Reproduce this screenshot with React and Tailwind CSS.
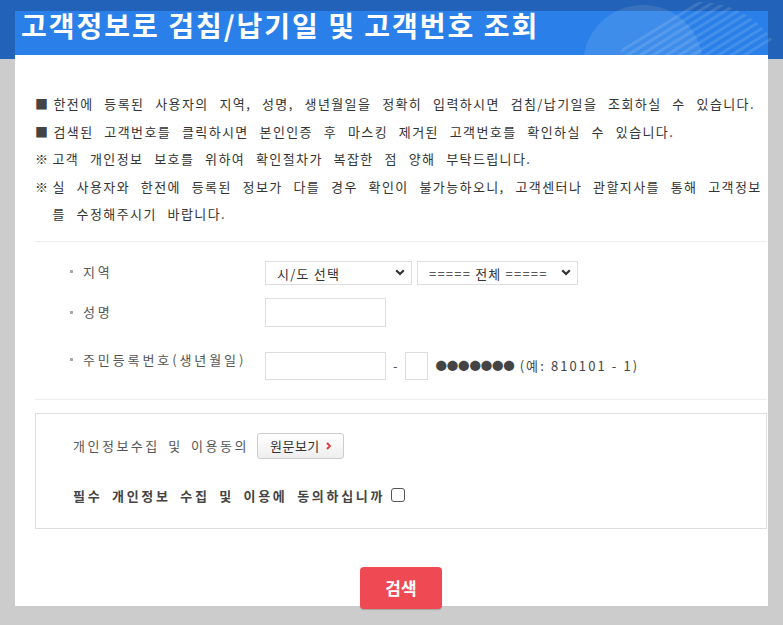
import React from "react";

const font = { fontFamily: '"Noto Sans CJK KR", "Noto Sans", sans-serif' };

function Label({ children, top }) {
    return (
        <div className={`flex w-[230px] shrink-0 items-center gap-[10px] pl-[35px] text-[13px] tracking-[2.9px] text-[#555] ${top ? "leading-[16px]" : ""}`}>
            <span className="h-[3px] w-[3px] bg-[#aaa]"></span>
            <span>{children}</span>
        </div>
    );
}

function Select({ width, children }) {
    return (
        <div className={`relative h-[24px] ${width}`}>
            <select className="h-full w-full appearance-none border border-[#ddd] bg-white pl-[11px] text-[13px] tracking-[1.2px] text-[#333] outline-none">
                <option>{children}</option>
            </select>
            <svg className="pointer-events-none absolute right-[7px] top-[9px]" width="10" height="7" viewBox="0 0 10 7">
                <path d="M1.2 1.2 L5 5 L8.8 1.2" fill="none" stroke="#333" strokeWidth="2.2" />
            </svg>
        </div>
    );
}

export default function App() {
    return (
        <div
            className="relative min-h-[625px] bg-[linear-gradient(to_bottom,#2262b8_59px,#cccccc_59px)] px-[15px] pt-[15px]"
            style={font}
        >
            {/* header decoration */}
            <svg className="pointer-events-none absolute left-0 top-0 z-10" width="783" height="59" viewBox="0 0 783 59">
                <defs>
                    <clipPath id="stripeClip">
                        <circle cx="700" cy="90" r="88" />
                    </clipPath>
                </defs>
                <circle cx="643" cy="65" r="60" fill="#ffffff" fillOpacity="0.1" />
                <g clipPath="url(#stripeClip)" stroke="#ffffff" strokeOpacity="0.12" strokeWidth="3">
                    {[600, 613, 626, 639, 652, 665, 678, 691, 704, 717, 730].map((x) => (
                        <line key={x} x1={x} y1="64" x2={x + 104} y2="0" />
                    ))}
                </g>
            </svg>

            <div className="h-[595px] bg-white">
                <div className="h-[44px] bg-[#2a80e8] pl-[6px]">
                    <h1 className="-mt-[4px] text-[28px] font-bold leading-[28px] tracking-[2px] text-white">
                        고객정보로 검침/납기일 및 고객번호 조회
                    </h1>
                </div>

                <div className="pl-[20px] pr-[1px]">
                    <div className="whitespace-nowrap pt-[35px] text-[13px] leading-[27.5px] tracking-[1.4px] text-[#333] [word-spacing:6.5px]">
                        <p className="flex">
                            <span className="mr-[4px] text-[#444]">■</span>
                            <span>한전에 등록된 사용자의 지역, 성명, 생년월일을 정확히 입력하시면 검침/납기일을 조회하실 수 있습니다.</span>
                        </p>
                        <p className="flex">
                            <span className="mr-[4px] text-[#444]">■</span>
                            <span>검색된 고객번호를 클릭하시면 본인인증 후 마스킹 제거된 고객번호를 확인하실 수 있습니다.</span>
                        </p>
                        <p className="flex">
                            <span className="mr-[3px]">※</span>
                            <span>고객 개인정보 보호를 위하여 확인절차가 복잡한 점 양해 부탁드립니다.</span>
                        </p>
                        <p className="flex">
                            <span className="mr-[3px]">※</span>
                            <span>
                                실 사용자와 한전에 등록된 정보가 다를 경우 확인이 불가능하오니, 고객센터나 관할지사를 통해 고객정보
                                <br />
                                를 수정해주시기 바랍니다.
                            </span>
                        </p>
                    </div>

                    <div className="mt-[13px] border-t border-[#eee]"></div>

                    <div className="pt-[18px]">
                        <div className="flex items-center">
                            <Label>지역</Label>
                            <div className="flex gap-[5px]">
                                <Select width="w-[147px]">시/도 선택</Select>
                                <Select width="w-[161px]">===== 전체 =====</Select>
                            </div>
                        </div>

                        <div className="mt-[14px] flex items-center">
                            <Label>성명</Label>
                            <input className="h-[29px] w-[121px] border border-[#ddd] outline-none" />
                        </div>

                        <div className="mt-[25px] flex items-start">
                            <Label top>주민등록번호(생년월일)</Label>
                            <div className="flex items-center">
                                <input className="h-[28px] w-[121px] border border-[#ddd] outline-none" />
                                <span className="mx-[7px] text-[13px] text-[#555]">-</span>
                                <input className="h-[28px] w-[23px] border border-[#ddd] outline-none" />
                                <span className="ml-[8px] text-[11.5px] tracking-[-0.2px] text-[#444]">●●●●●●●</span>
                                <span className="ml-[5px] text-[13px] tracking-[2.1px] text-[#444]">(예: 810101 - 1)</span>
                            </div>
                        </div>
                    </div>

                    <div className="mt-[19px] border-t border-[#eee]"></div>

                    <div className="mt-[13px] h-[116px] border border-[#ddd] pl-[37px] pt-[19px]">
                        <div className="flex items-center">
                            <span className="text-[13px] tracking-[2.5px] text-[#555] [word-spacing:3px]">개인정보수집 및 이용동의</span>
                            <button className="ml-[8px] flex h-[26px] w-[87px] items-center justify-center gap-[6px] rounded-[3px] border border-[#ccc] bg-[linear-gradient(to_bottom,#ffffff,#eeeeee)] text-[13px] tracking-[0.5px] text-[#333]">
                                원문보기
                                <svg width="5" height="8" viewBox="0 0 5 8">
                                    <path d="M1 1 L4 4 L1 7" fill="none" stroke="#e8343c" strokeWidth="1.8" />
                                </svg>
                            </button>
                        </div>
                        <div className="mt-[27px] flex items-center">
                            <span className="text-[13px] font-bold tracking-[2.7px] text-[#444] [word-spacing:4px]">
                                필수 개인정보 수집 및 이용에 동의하십니까
                            </span>
                            <span className="ml-[6px] h-[14px] w-[14px] rounded-[3px] border border-[#555] bg-white"></span>
                        </div>
                    </div>

                    <div className="mt-[38px] flex justify-center">
                        <button className="h-[42px] w-[82px] rounded-[4px] bg-[#ef4a53] text-[17px] font-bold text-white shadow-[0_1px_1px_rgba(0,0,0,0.2)]">
                            검색
                        </button>
                    </div>
                </div>
            </div>
        </div>
    );
}
